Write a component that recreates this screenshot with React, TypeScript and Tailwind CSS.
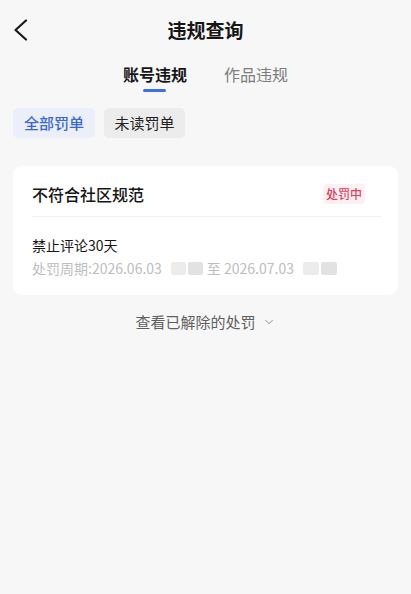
import { ChevronDown } from "lucide-react";

const FONT = { fontFamily: '"Noto Sans CJK SC", "Noto Sans", sans-serif' };

function Blur({ w }: { w: string }) {
  return (
    <span className={["ml-[9px] mr-[4px] inline-flex h-[13px] items-center gap-[2px] align-middle", w].join(" ")}>
      <span className="h-full flex-1 rounded-[2px] bg-[#ececec]" />
      <span className="h-full flex-1 rounded-[2px] bg-[#e2e2e2]" />
    </span>
  );
}

export default function App() {
  return (
    <div className="min-h-screen w-full bg-[#f7f7f7] text-[#161616]" style={FONT}>
      <header className="relative flex h-[60px] items-center justify-center">
        <button className="absolute left-[13px] top-[19px] text-[#1a1a1a]">
          <svg width="16" height="22" viewBox="0 0 16 22" fill="none">
            <path d="M13 1.5 L2.5 11 L13 20.5" stroke="currentColor" strokeWidth="2.2" strokeLinecap="round" strokeLinejoin="round" />
          </svg>
        </button>
        <h1 className="text-[19px] font-bold">违规查询</h1>
      </header>

      <nav className="flex justify-center gap-[37px]">
        <div className="flex flex-col items-center">
          <span className="text-[16px] font-bold leading-[28px]">账号违规</span>
          <span className="mt-[1px] h-[3px] w-[23px] rounded-full bg-[#3d6fe0]" />
        </div>
        <span className="text-[16px] leading-[28px] text-[#7d7d7d]">作品违规</span>
      </nav>

      <div className="mt-[16px] flex gap-[9px] px-[13px]">
        <span className="flex h-[30px] w-[82px] items-center justify-center rounded-[5px] bg-[#eaeffa] text-[15px] font-medium text-[#3a68d2]">
          全部罚单
        </span>
        <span className="flex h-[30px] w-[81px] items-center justify-center rounded-[5px] bg-[#ececec] text-[15px] text-[#222]">
          未读罚单
        </span>
      </div>

      <div className="mx-[13px] mt-[28px] rounded-[9px] bg-white pl-[19px] pr-[17px] pb-[16px]">
        <div className="flex h-[51px] items-center justify-between border-b border-[#f0f0f0] pt-[5px]">
          <span className="text-[16px] font-medium">不符合社区规范</span>
          <span className="mr-[16px] flex h-[20px] w-[42px] items-center justify-center rounded-[4px] bg-[#fdf0f2] text-[12px] font-medium text-[#e0405e]">
            处罚中
          </span>
        </div>
        <div className="pt-[17px] text-[14px] leading-[22px]">禁止评论30天</div>
        <div className="mt-[1px] flex items-center whitespace-nowrap text-[14px] leading-[22px] text-[#bdbdbd]">
          <span>处罚周期:2026.06.03</span>
          <Blur w="w-[32px]" />
          <span>至 2026.07.03</span>
          <Blur w="w-[34px]" />
        </div>
      </div>

      <div className="mt-[16px] flex items-center justify-center gap-[6px] text-[15px] text-[#5f5f5f]">
        <span>查看已解除的处罚</span>
        <ChevronDown size={14} strokeWidth={1.6} className="text-[#8a8a8a]" />
      </div>
    </div>
  );
}
